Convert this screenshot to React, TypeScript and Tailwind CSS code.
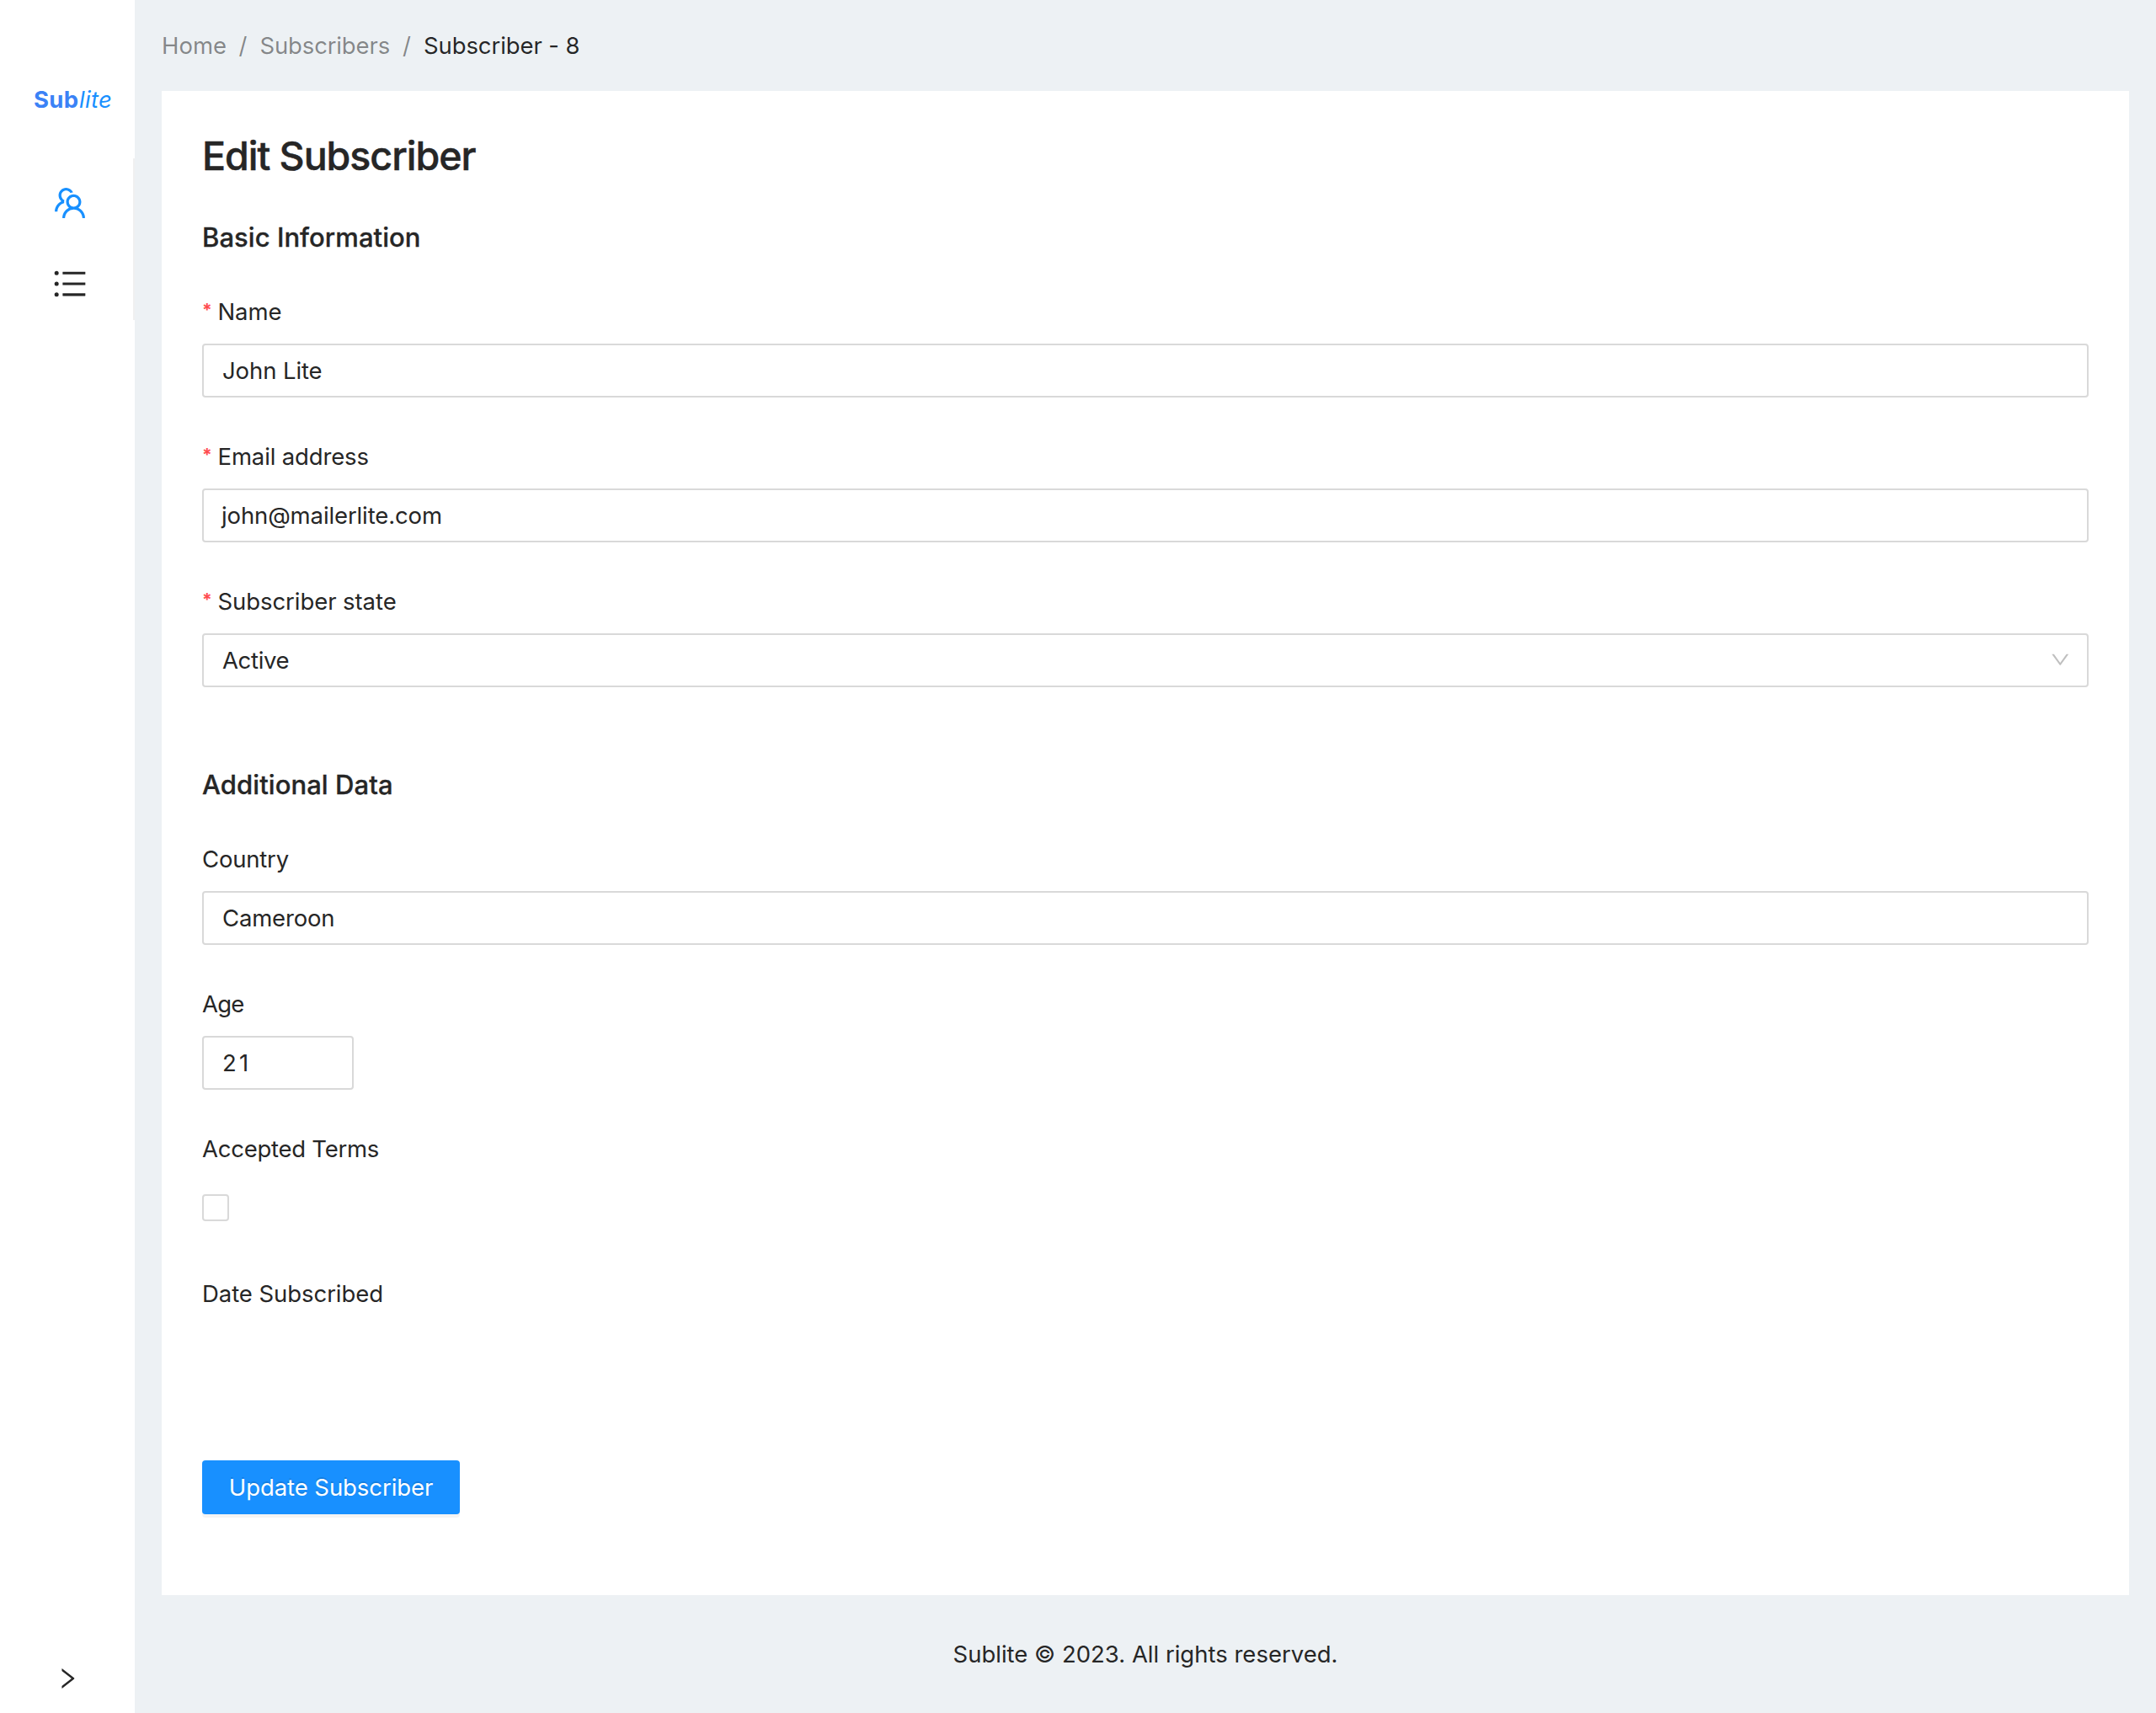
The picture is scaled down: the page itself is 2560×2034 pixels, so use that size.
import type { ReactNode } from "react";
import {
  AiOutlineDown,
  AiOutlineRight,
  AiOutlineTeam,
  AiOutlineUnorderedList,
} from "react-icons/ai";

function Label({ children, required = false, className = "" }: { children: ReactNode; required?: boolean; className?: string }) {
  return (
    <label className="flex h-11 items-center whitespace-nowrap">
      {required && (
        <span className="relative -top-[1px] w-[18.5px] text-[21px] leading-[30px] font-bold text-[#ff4d4f]">*</span>
      )}
      <span className={className}>{children}</span>
    </label>
  );
}

function Box({ children, className = "" }: { children: ReactNode; className?: string }) {
  return (
    <div className={`mt-4 mb-12 flex h-16 items-center justify-between rounded-[4px] border-2 border-[#d9d9d9] bg-white pl-[22px] ${className}`}>
      {children}
    </div>
  );
}

function Sidebar() {
  return (
    <aside className="flex h-full w-40 shrink-0 flex-col bg-white">
      <div className="mt-[96px] flex h-11 items-center pl-10 whitespace-nowrap">
        <span className="w-[54px] font-bold tracking-[0.3px] text-[#3b82f6]">Sub</span>
        <span className="tracking-[0.3px] text-[#1890ff] italic">lite</span>
      </div>
      <nav className="mt-12 flex h-48 flex-col border-r-2 border-[#f0f0f0] pl-[60px]">
        <a className="flex h-24 items-center pt-[10px] text-[46px] text-[#1890ff]">
          <AiOutlineTeam />
        </a>
        <a className="flex h-24 items-center pt-[10px] text-[46px]">
          <AiOutlineUnorderedList />
        </a>
      </nav>
      <button className="mt-auto flex h-[82px] items-center justify-center text-[32px]">
        <AiOutlineRight />
      </button>
    </aside>
  );
}

function Breadcrumb() {
  return (
    <div className="flex h-[108px] items-center text-black/45">
      <a className="w-[76.5px]">Home</a>
      <span className="w-10 text-center">/</span>
      <a className="w-[154.5px] tracking-[-0.15px]">Subscribers</a>
      <span className="w-10 text-center">/</span>
      <span className="tracking-[-0.1px] text-black/85">Subscriber - 8</span>
    </div>
  );
}

export default function App() {
  return (
    <div className="flex h-[2034px] w-[2560px] overflow-hidden bg-[#edf1f4] font-['Inter',sans-serif] text-[27.5px] leading-11 text-[#262626]">
      <Sidebar />
      <main className="flex flex-1 flex-col px-8">
        <Breadcrumb />
        <section className="h-[1786px] bg-white p-12">
          <h1 className="h-[59px] text-[46.5px] leading-[59px] font-medium tracking-[-1.02px] [-webkit-text-stroke:0.5px_#262626]">
            Edit Subscriber
          </h1>
          <h2 className="mt-[45px] mb-11 text-[31px] leading-11 font-medium tracking-[0.05px] [-webkit-text-stroke:0.3px_#262626]">
            Basic Information
          </h2>

          <Label required className="tracking-[-0.1px]">Name</Label>
          <Box><span className="tracking-[-0.1px]">John Lite</span></Box>
          <Label required className="tracking-[-0.14px]">Email address</Label>
          <Box><span className="-ml-px tracking-[-0.12px]">john@mailerlite.com</span></Box>
          <Label required className="tracking-[-0.07px]">Subscriber state</Label>
          <Box className="pr-[19px]">
            <span className="tracking-[-0.35px]">Active</span>
            <AiOutlineDown className="relative -top-px text-[26.5px] text-black/25" />
          </Box>

          <h2 className="mt-[93px] mb-11 text-[31px] leading-[45px] font-medium tracking-[0.07px] [-webkit-text-stroke:0.3px_#262626]">
            Additional Data
          </h2>

          <Label className="tracking-[-0.2px]">Country</Label>
          <Box><span className="tracking-[-0.18px]">Cameroon</span></Box>
          <Label className="tracking-[-0.8px]">Age</Label>
          <Box className="w-[180px]"><span className="tracking-[3.2px]">21</span></Box>
          <Label className="tracking-[-0.25px]">Accepted Terms</Label>
          <div className="mt-4 mb-12 flex h-16 items-center">
            <span className="size-8 rounded-[4px] border-2 border-[#d9d9d9] bg-white" />
          </div>
          <Label className="tracking-[-0.06px]">Date Subscribed</Label>

          <button className="mt-44 flex h-16 w-[306px] items-center justify-center rounded-[4px] bg-[#1890ff] tracking-[-0.07px] text-white shadow-[0_4px_0_rgba(0,0,0,0.045)] [text-shadow:0_-2px_0_rgba(0,0,0,0.12)]">
            Update Subscriber
          </button>
        </section>
        <footer className="flex h-[140px] items-center justify-center">
          Sublite © 2023. All rights reserved.
        </footer>
      </main>
    </div>
  );
}
